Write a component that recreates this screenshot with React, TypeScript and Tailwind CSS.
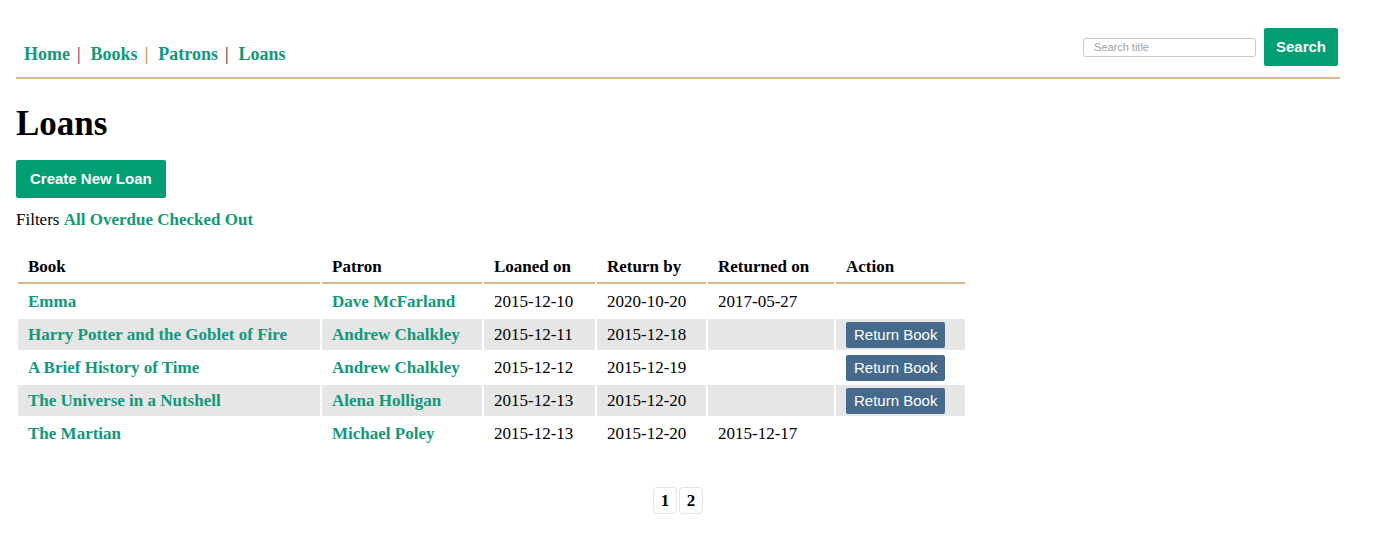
const loans = [
  { book: "Emma", patron: "Dave McFarland", loaned: "2015-12-10", due: "2020-10-20", returned: "2017-05-27" },
  { book: "Harry Potter and the Goblet of Fire", patron: "Andrew Chalkley", loaned: "2015-12-11", due: "2015-12-18", returned: "" },
  { book: "A Brief History of Time", patron: "Andrew Chalkley", loaned: "2015-12-12", due: "2015-12-19", returned: "" },
  { book: "The Universe in a Nutshell", patron: "Alena Holligan", loaned: "2015-12-13", due: "2015-12-20", returned: "" },
  { book: "The Martian", patron: "Michael Poley", loaned: "2015-12-13", due: "2015-12-20", returned: "2015-12-17" },
];

const serif = "font-['Liberation_Serif',serif]";
const sans = "font-['Liberation_Sans',sans-serif]";

const App = () => (
  <div className={`${serif} text-[17px] text-black bg-white min-h-[551px] px-4`}>
    <header className="flex items-start justify-between w-[1324px] border-b-2 border-[#deb887] pt-7 pb-[9px]">
      <nav className="flex items-center mt-[13px] pl-2 text-[18px] leading-[27px] font-bold text-[#12987a]">
        <a>Home</a>
        <span className="ml-[7px] mr-[10px] font-normal text-[#5a1a5a]">|</span>
        <a>Books</a>
        <span className="ml-[7px] mr-[10px] font-normal text-[#c07a20]">|</span>
        <a>Patrons</a>
        <span className="ml-[7px] mr-[10px] font-normal text-[#2a1a3a]">|</span>
        <a>Loans</a>
      </nav>
      <div className="flex items-center gap-2 pr-[2px]">
        <input
          placeholder="Search title"
          className={`${sans} w-[173px] h-[19px] border border-[#c8c8c8] rounded-[3px] px-[10px] text-[11px] placeholder:text-[#a0a0a0] outline-none`}
        />
        <button className={`${sans} h-[38px] px-[12px] bg-[#009e73] text-white font-bold text-[15px] rounded-[2px]`}>
          Search
        </button>
      </div>
    </header>

    <h1 className="text-[35px] font-bold mt-[25px] leading-[40px]">Loans</h1>

    <button className={`${sans} mt-[16px] h-[38px] px-[14px] bg-[#009e73] text-white font-bold text-[15px] rounded-[2px]`}>
      Create New Loan
    </button>

    <p className="mt-[10px] leading-[24px]">
      Filters{" "}
      <span className="font-bold text-[#12987a]">All Overdue Checked Out</span>
    </p>

    <table className="mt-[18px] border-separate border-spacing-[2px]">
      <thead>
        <tr className="text-left">
          {[
            ["Book", "w-[302px]"],
            ["Patron", "w-[160px]"],
            ["Loaned on", "w-[111px]"],
            ["Return by", "w-[109px]"],
            ["Returned on", "w-[126px]"],
            ["Action", "w-[129px]"],
          ].map(([label, w]) => (
            <th key={label} className={`${w} font-bold px-[10px] pt-[4px] pb-[4px] border-b-2 border-[#deb887] leading-[22px]`}>
              {label}
            </th>
          ))}
        </tr>
      </thead>
      <tbody>
        {loans.map((l, i) => (
          <tr key={l.book} className={i % 2 === 1 ? "bg-[#e6e6e6]" : ""}>
            <td className="h-[31px] px-[10px] font-bold text-[#12987a]">{l.book}</td>
            <td className="px-[10px] font-bold text-[#12987a]">{l.patron}</td>
            <td className="px-[10px]">{l.loaned}</td>
            <td className="px-[10px]">{l.due}</td>
            <td className="px-[10px]">{l.returned}</td>
            <td className="px-[10px]">
              {!l.returned && (
                <button className={`${sans} h-[26px] px-[8px] bg-[#466a8b] text-white text-[15px] rounded-[2px] leading-[26px]`}>
                  Return Book
                </button>
              )}
            </td>
          </tr>
        ))}
      </tbody>
    </table>

    <div className="flex justify-center gap-[2px] mt-[36px] w-[1324px]">
      {["1", "2"].map((n) => (
        <span key={n} className="w-[24px] h-[27px] flex items-center justify-center border border-[#e4e4e4] rounded-[4px] font-bold">
          {n}
        </span>
      ))}
    </div>
  </div>
);

export default App;
